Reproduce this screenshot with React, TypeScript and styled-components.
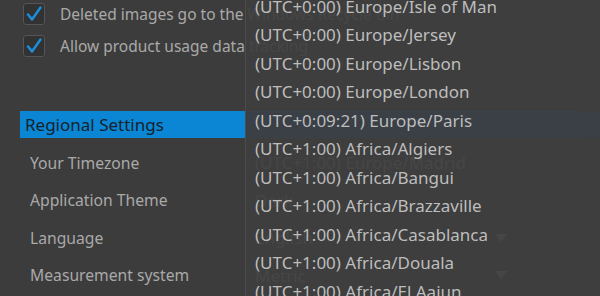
import React from "react";
import styled, { createGlobalStyle } from "styled-components";

const Global = createGlobalStyle`
  html, body { margin: 0; padding: 0; background: #3c3c3c; overflow: hidden; }
  body { font-family: "Noto Sans", "Open Sans", sans-serif; }
`;

const Page = styled.div`
  position: relative;
  width: 600px;
  height: 296px;
  overflow: hidden;
  background: #3c3c3c;
`;

const Settings = styled.div`
  display: flex;
  flex-direction: column;
  padding-top: 3px;
`;

const CheckRow = styled.label`
  display: flex;
  align-items: center;
  gap: 15px;
  height: 22px;
  padding-left: 23px;
  margin-bottom: 10px;
  font-size: 15.5px;
  color: #a9a9a9;
  white-space: nowrap;
`;

const Box = styled.span`
  width: 20px;
  height: 20px;
  border: 1px solid #555;
  border-radius: 3px;
  background: #323232;
  display: flex;
  align-items: center;
  justify-content: center;
`;

const SectionHeader = styled.div`
  margin: 44px 0 6px 20px;
  width: 560px;
  height: 27px;
  background: #0a86d4;
  color: #16222c;
  font-size: 17px;
  line-height: 27px;
  padding-left: 5px;
  box-sizing: border-box;
`;

const Row = styled.div`
  display: grid;
  grid-template-columns: 225px 1fr;
  align-items: center;
  height: 37.5px;
  padding-left: 30px;
  font-size: 15.7px;
  color: #a9a9a9;
  white-space: nowrap;
`;

const Value = styled.span`
  display: flex;
  justify-content: space-between;
  align-items: center;
  width: 252px;
  font-size: 17px;
`;

const Arrow = styled.span`
  width: 0;
  height: 0;
  border-left: 6px solid transparent;
  border-right: 6px solid transparent;
  border-top: 8px solid #a9a9a9;
`;

const Dropdown = styled.ul`
  position: absolute;
  left: 245px;
  top: -32px;
  width: 360px;
  height: 340px;
  margin: 0;
  padding: 0;
  list-style: none;
  background: rgba(62, 62, 62, 0.93);
  border-left: 1px solid #4c4c4c;
`;

const Item = styled.li<{ $active?: boolean }>`
  height: 28.5px;
  line-height: 20px;
  padding-left: 9px;
  font-size: 17px;
  color: #bdbdbd;
  white-space: nowrap;
  background: ${(p) =>
    p.$active
      ? "linear-gradient(#3a4046, #3a4046) 0 1.5px / 100% 25.5px no-repeat"
      : "transparent"};
`;

const Check = () => (
  <svg width="18" height="18" viewBox="0 0 18 18">
    <path d="M3 9.5 L7 14.5 L15.5 2.5" fill="none" stroke="#1a8fe0" strokeWidth="2.4" strokeLinecap="round" strokeLinejoin="round" />
  </svg>
);

const zones = [
  "(UTC+0:00) Europe/Guernsey",
  "(UTC+0:00) Europe/Isle of Man",
  "(UTC+0:00) Europe/Jersey",
  "(UTC+0:00) Europe/Lisbon",
  "(UTC+0:00) Europe/London",
  "(UTC+0:09:21) Europe/Paris",
  "(UTC+1:00) Africa/Algiers",
  "(UTC+1:00) Africa/Bangui",
  "(UTC+1:00) Africa/Brazzaville",
  "(UTC+1:00) Africa/Casablanca",
  "(UTC+1:00) Africa/Douala",
  "(UTC+1:00) Africa/El Aaiun",
];

export default function App() {
  return (
    <Page>
      <Global />
      <Settings>
        <CheckRow>
          <Box><Check /></Box>
          Deleted images go to the Windows Recycle Bin
        </CheckRow>
        <CheckRow>
          <Box><Check /></Box>
          Allow product usage data tracking
        </CheckRow>
        <SectionHeader>Regional Settings</SectionHeader>
        <Row>
          <span>Your Timezone</span>
          <Value>(UTC+1:00) Europe/Madrid</Value>
        </Row>
        <Row>
          <span>Application Theme</span>
          <Value>Dark</Value>
        </Row>
        <Row>
          <span>Language</span>
          <Value>English<Arrow /></Value>
        </Row>
        <Row>
          <span>Measurement system</span>
          <Value>Metric<Arrow /></Value>
        </Row>
      </Settings>
      <Dropdown>
        {zones.map((z) => (
          <Item key={z} $active={z.includes("Paris")}>{z}</Item>
        ))}
      </Dropdown>
    </Page>
  );
}
